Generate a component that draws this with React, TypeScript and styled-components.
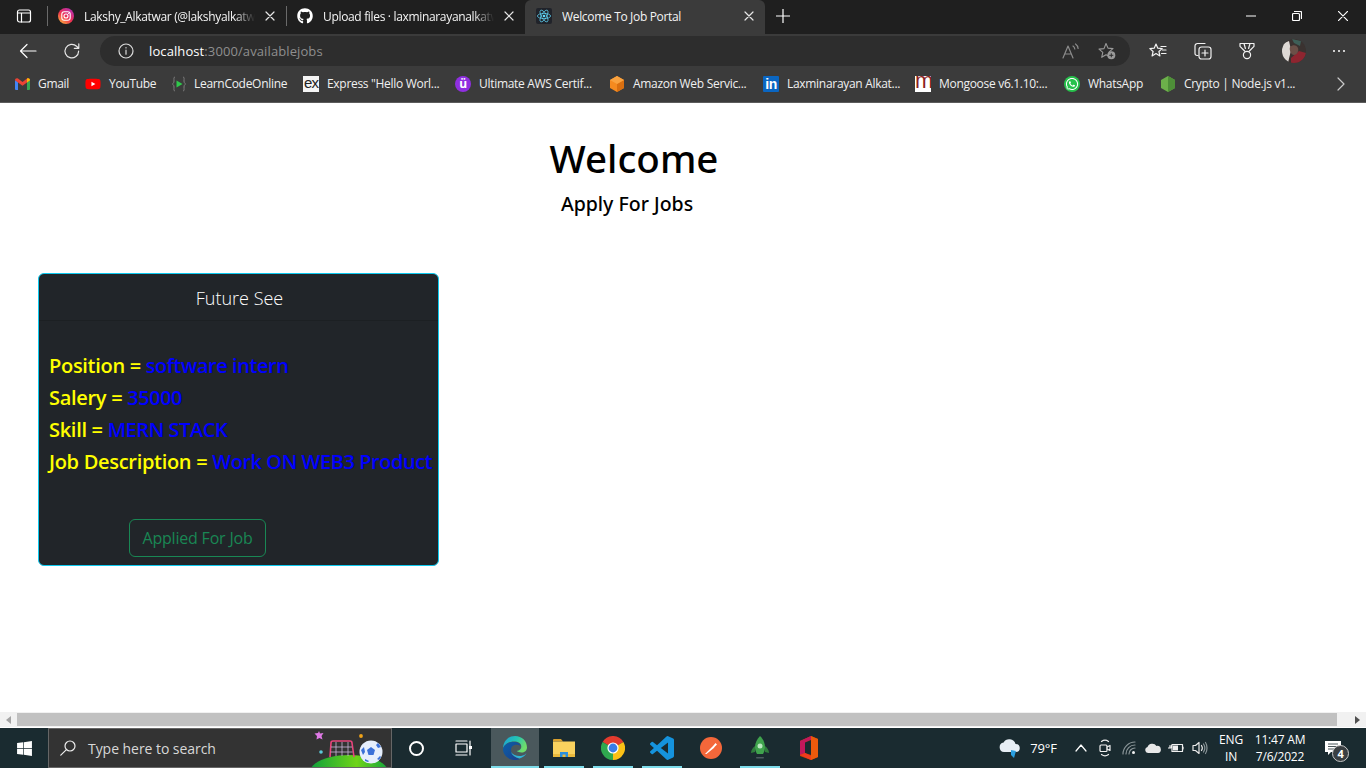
import React from 'react'
import styled, { createGlobalStyle } from 'styled-components'
import { FaGithub, FaWhatsapp, FaWindows, FaYoutube } from 'react-icons/fa'

const UI_FONT = '"Open Sans", "Noto Sans", "Liberation Sans", sans-serif'
const MEDIUM_FONT = '"Noto Sans", "Open Sans", "Liberation Sans", sans-serif'

const GlobalStyle = createGlobalStyle`
  html, body {
    margin: 0;
    padding: 0;
    width: 1366px;
    height: 768px;
    overflow: hidden;
    background: #fff;
    font-family: ${UI_FONT};
  }
  * { box-sizing: border-box; }
`

/* ---------- small drawn icons ---------- */

const Stroke = styled.svg`
  display: block;
  flex: none;
  fill: none;
  stroke: currentColor;
  stroke-width: 1.2;
  stroke-linecap: round;
  stroke-linejoin: round;
`

const Drawn = styled.svg`
  display: block;
  flex: none;
`

const SidebarIcon = () => (
  <Stroke width="16" height="16" viewBox="0 0 16 16" color="#fff" strokeWidth="1.5">
    <rect x="1.5" y="2" width="13" height="12" rx="2" />
    <path d="M1.5 5h13M5.5 5v9" />
  </Stroke>
)

const Close = ({ size = 10 }: { size?: number }) => (
  <Stroke width={size} height={size} viewBox="0 0 10 10" color="#e6e6e6">
    <path d="M1 1l8 8M9 1l-8 8" />
  </Stroke>
)

const Instagram = () => (
  <Drawn width="16" height="16" viewBox="0 0 16 16">
    <defs>
      <linearGradient id="ig" x1="0.1" y1="1" x2="0.9" y2="0">
        <stop offset="0" stopColor="#fdc13c" />
        <stop offset="0.45" stopColor="#f0304f" />
        <stop offset="1" stopColor="#b02fc0" />
      </linearGradient>
    </defs>
    <circle cx="8" cy="8" r="8" fill="url(#ig)" />
    <rect x="3.8" y="3.8" width="8.4" height="8.4" rx="2.4" fill="none" stroke="#fff" strokeWidth="1.1" />
    <circle cx="8" cy="8" r="2" fill="none" stroke="#fff" strokeWidth="1.1" />
    <circle cx="10.5" cy="5.5" r="0.6" fill="#fff" />
  </Drawn>
)

const ReactIcon = () => (
  <Drawn width="16" height="16" viewBox="0 0 16 16">
    <rect width="16" height="16" rx="2" fill="#20232a" />
    <g fill="none" stroke="#61dafb" strokeWidth="0.7">
      <ellipse cx="8" cy="8" rx="6.6" ry="2.6" />
      <ellipse cx="8" cy="8" rx="6.6" ry="2.6" transform="rotate(60 8 8)" />
      <ellipse cx="8" cy="8" rx="6.6" ry="2.6" transform="rotate(120 8 8)" />
    </g>
    <circle cx="8" cy="8" r="1.3" fill="#61dafb" />
  </Drawn>
)

const BackIcon = () => (
  <Stroke width="18" height="16" viewBox="0 0 18 16" color="#fff">
    <path d="M17 8H1.5M8 1.5L1.5 8 8 14.5" />
  </Stroke>
)

const RefreshIcon = () => (
  <Stroke width="18" height="18" viewBox="0 0 18 18" color="#e8e8e8">
    <path d="M15.6 9.2a6.8 6.8 0 1 1-2-4.9l2 1.9M15.8 1.8v4.5h-4.5" />
  </Stroke>
)

const InfoIcon = () => (
  <Stroke width="16" height="16" viewBox="0 0 16 16" color="#dcdcdc">
    <circle cx="8" cy="8" r="7" />
    <path d="M8 7.2v4M8 4.6v.4" />
  </Stroke>
)

const ReadAloud = () => (
  <Stroke width="17" height="16" viewBox="0 0 17 16" color="#8b8b8b">
    <path d="M1 15L6 3l5 12M2.800 11h6.400M11 3c1 .7 1.600 1.600 1.800 3M13.500 1c1.500 1 2.400 2.600 2.600 4.500" />
  </Stroke>
)

const StarAdd = () => (
  <Drawn width="18" height="18" viewBox="0 0 18 18">
    <path
      d="M8 1.500l2 4.600 5 .5-3.800 3.300 1.100 4.900L8 12.700l-4.300 2.600 1.100-4.900L1 7.100l5-.5z"
      fill="none"
      stroke="#9a9a9a"
      strokeWidth="1.1"
      strokeLinejoin="round"
    />
    <circle cx="13.300" cy="13.300" r="4" fill="#9a9a9a" />
    <path d="M13.300 11.300v4M11.300 13.300h4" stroke="#2e2e2e" strokeWidth="1" />
  </Drawn>
)

const FavoritesIcon = () => (
  <Stroke width="18" height="18" viewBox="0 0 18 18" color="#f2f2f2">
    <path d="M7 2l1.800 4.200 4.400.4-3.300 2.900 1 4.400L7 11.500l-3.900 2.400 1-4.400L.8 6.600l4.400-.4zM12 4.500h5M13.500 8h3.500M12.500 11.500h4.500" />
  </Stroke>
)

const CollectionsIcon = () => (
  <Stroke width="18" height="18" viewBox="0 0 18 18" color="#f2f2f2">
    <path d="M4 13.500H3a2 2 0 0 1-2-2V4a2.500 2.500 0 0 1 2.500-2.500H11" />
    <rect x="5" y="5" width="12" height="12" rx="2.500" />
    <path d="M11 8v6M8 11h6" />
  </Stroke>
)

const MedalIcon = () => (
  <Stroke width="18" height="18" viewBox="0 0 18 18" color="#f2f2f2">
    <path d="M2 1.500h14v2.800L11.400 9M2 1.500v2.800L6.600 9M6 1.500l1.400 5M12 1.500l-1.400 5" />
    <circle cx="9" cy="13" r="3.600" />
  </Stroke>
)

const AvatarSvg = styled(Drawn)`
  margin-left: -1px;
`

const Avatar = () => (
  <AvatarSvg width="24" height="24" viewBox="0 0 24 24">
    <defs>
      <clipPath id="av">
        <circle cx="12" cy="12" r="12" />
      </clipPath>
    </defs>
    <g clipPath="url(#av)">
      <rect width="24" height="24" fill="#3a3230" />
      <path d="M0 5l7-3 2 9-3 13H0z" fill="#ded9d5" />
      <path d="M9 19l8-7 7 2v10H9z" fill="#8e2530" />
      <path d="M8 8c3-3 7-2 8 1s-1 7-4 7-5-5-4-8z" fill="#6b5048" />
      <path d="M10 0l9 2-1 5-6-3z" fill="#3e5f58" />
    </g>
  </AvatarSvg>
)

const Chevron = () => (
  <Stroke width="8" height="14" viewBox="0 0 8 14" color="#c9c9c9">
    <path d="M1 1l6 6-6 6" />
  </Stroke>
)

/* bookmark favicons */

const Gmail = () => (
  <Drawn width="15" height="12" viewBox="0 0 15 12">
    <path d="M0 2l3 2v8H1a1 1 0 0 1-1-1z" fill="#4285f4" />
    <path d="M15 2l-3 2v8h2a1 1 0 0 0 1-1z" fill="#34a853" />
    <path d="M0 2.200C0 .6 1.600-.4 3 .6l4.500 3.300L12 .6c1.400-1 3 0 3 1.600l-3 2.300-4.500 3.300L3 4.500z" fill="#ea4335" />
    <path d="M12 .6c1.400-1 3 0 3 1.600l-3 2.300z" fill="#fbbc04" />
  </Drawn>
)

const CodeOnline = () => (
  <Drawn width="14" height="16" viewBox="0 0 14 16">
    <path d="M3 1C1.500 1 2 3 2 5S1 7.500.5 8C1 8.500 2 9 2 11s-.5 4 1 4M11 1c1.500 0 1 2 1 4s1 2.500 1.500 3c-.5.5-1.500 1-1.500 3s.5 4-1 4" fill="none" stroke="#7d7d7d" strokeWidth="1" />
    <path d="M4.500 4.500l6 3.500-6 3.500z" fill="#2fc94b" />
  </Drawn>
)

const ExpressBox = styled.span`
  flex: none;
  width: 16px;
  height: 16px;
  background: #f4f4f4;
  color: #222;
  font: 400 15px/14px "Liberation Sans", sans-serif;
  letter-spacing: -1px;
  text-align: center;
  overflow: hidden;
`

const UltimateBadge = styled.span`
  flex: none;
  width: 16px;
  height: 16px;
  border-radius: 50%;
  background: #8f2fe0;
  color: #fff;
  font: 700 12px/15px ${UI_FONT};
  text-align: center;
`

const MongooseBox = styled.span`
  flex: none;
  width: 16px;
  height: 16px;
  background: #fff;
  color: #8c1f24;
  font: 400 22px/10px "Liberation Sans", sans-serif;
  text-align: center;
  overflow: hidden;
`

const LinkedinBox = styled.span`
  flex: none;
  width: 16px;
  height: 16px;
  border-radius: 1px;
  background: #0a66c2;
  color: #fff;
  font: 700 14px/16px "Liberation Sans", sans-serif;
  letter-spacing: -0.5px;
  text-align: center;
`

const AwsCube = () => (
  <Drawn width="16" height="16" viewBox="0 0 16 16">
    <path d="M8 0l7 4v8l-7 4-7-4V4z" fill="#f58a1f" />
    <path d="M8 8l7-4v8l-7 4z" fill="#d96f10" />
    <path d="M8 8L1 4l7-4 7 4z" fill="#f9a23f" />
  </Drawn>
)

const NodeHex = () => (
  <Drawn width="16" height="16" viewBox="0 0 16 16">
    <path d="M8 0l7 4v8l-7 4-7-4V4z" fill="#6cb04a" />
    <path d="M8 0l7 4v8l-7 4z" fill="#4e8f38" />
  </Drawn>
)

/* taskbar icons */

const SearchGlyph = () => (
  <Stroke width="16" height="16" viewBox="0 0 16 16" color="#eee" strokeWidth="1.1">
    <circle cx="10" cy="6" r="5" />
    <path d="M6.400 9.600L.8 15.200" />
  </Stroke>
)

const ScoreArt = () => (
  <ArtHolder>
    <svg width="84" height="40" viewBox="0 0 84 40">
      <defs>
        <linearGradient id="hill" x1="0" y1="0" x2="1" y2="0">
          <stop offset="0" stopColor="#0fa03a" />
          <stop offset="0.6" stopColor="#6fd418" />
          <stop offset="1" stopColor="#16a63a" />
        </linearGradient>
      </defs>
      <path d="M4 40C10 31 26 27 42 27s32 4 38 13z" fill="url(#hill)" />
      <path d="M23 29l1-14c0-1 1-2 2-2h17c1 0 2 1 2 2l2 14" fill="none" stroke="#e8457c" strokeWidth="1.600" />
      <path d="M29 14v14M35 14v14M41 14v14M24 19h21M23.500 24h22" stroke="#c9b6d8" strokeWidth="0.800" fill="none" />
      <circle cx="64" cy="24" r="11.500" fill="#e6eefc" />
      <path d="M64 19l4 3-1.500 5h-5L60 22z" fill="#3a70d8" />
      <path d="M54 22l3-3 1 5-2 3zM71 15l3 4-3 1-2-3zM70 31l3-3 1 1-2 3zM58 31l4 2-1 1-3-1z" fill="#3a70d8" />
      <path d="M12 3l1 2.500 3.500-.5-2 3 1 3.500-3-1.500-3 1.500.5-3.500-2.500-2.500 3.500-.5z" fill="#df7ae6" />
      <circle cx="14" cy="24" r="1.800" fill="#5cc8d8" />
      <circle cx="54" cy="8" r="1.900" fill="#f0a318" />
    </svg>
  </ArtHolder>
)

const Edge = () => (
  <Drawn width="24" height="24" viewBox="0 0 24 24">
    <defs>
      <linearGradient id="edgeA" x1="0" y1="0" x2="1" y2="0.4">
        <stop offset="0" stopColor="#1d9fd8" />
        <stop offset="0.55" stopColor="#23c4b4" />
        <stop offset="1" stopColor="#6fdc6a" />
      </linearGradient>
      <linearGradient id="edgeB" x1="0" y1="0" x2="1" y2="1">
        <stop offset="0" stopColor="#0b5fa8" />
        <stop offset="1" stopColor="#1a3f8c" />
      </linearGradient>
    </defs>
    <path d="M12 0c7 0 12 5 12 11.500 0 3-2.500 5-5.500 5-2 0-4-.6-4.800-1.400 3-.4 4.600-2 4.600-4.300C18.300 7 15 5.500 11 5.500 5 5.500.6 9.500 0 13 0 5.500 5 0 12 0z" fill="url(#edgeA)" />
    <path d="M0 13C.6 9.500 5 6 10.500 6c3.500 0 6.500 1.500 7 3.800-1.500-1-4-1.400-6-.8-3 1-4.200 4-3 7.500 1 3 4 5.500 8.500 6.500-1.500.6-3 1-5 1C6 24 0 19.500 0 13z" fill="url(#edgeB)" />
    <path d="M16.500 22.500c-4.500-1-7.500-3.500-8.500-6.500 2 3 6 4.500 10 4 2.500-.3 4.500-1.500 5.500-3-1 2.500-3.500 4.500-7 5.500z" fill="#2fb4d8" />
  </Drawn>
)

const Explorer = () => (
  <Drawn width="22" height="18" viewBox="0 0 22 18">
    <path d="M0 1a1 1 0 0 1 1-1h7l2 2.500H0z" fill="#d9a02e" />
    <rect y="2.500" width="22" height="15.500" fill="#f9d25e" />
    <rect y="15" width="22" height="3" fill="#e9b93c" />
    <path d="M7 18v-5h8v5h-2.500v-2.500h-3V18z" fill="#2b8fdc" />
  </Drawn>
)

const Chrome = () => (
  <Drawn width="24" height="24" viewBox="0 0 24 24">
    <path d="M12 12L1.600 6a12 12 0 0 1 20.800 0z" fill="#e33b2e" />
    <path d="M12 12l10.400-6A12 12 0 0 1 12 24z" fill="#fbc116" />
    <path d="M12 12v12A12 12 0 0 1 1.600 6z" fill="#2fa84f" />
    <circle cx="12" cy="12" r="5.600" fill="#fff" />
    <circle cx="12" cy="12" r="4.400" fill="#3a7de8" />
  </Drawn>
)

const VsCode = () => (
  <Drawn width="24" height="24" viewBox="0 0 24 24">
    <path
      d="M23.150 2.587L18.210.21a1.494 1.494 0 0 0-1.705.29l-9.460 8.630-4.120-3.128a.999.999 0 0 0-1.276.057L.327 7.261A1 1 0 0 0 .326 8.740L3.899 12 .326 15.260a1 1 0 0 0 .001 1.479L1.650 17.940a.999.999 0 0 0 1.276.057l4.120-3.128 9.460 8.630a1.492 1.492 0 0 0 1.704.29l4.942-2.377A1.500 1.500 0 0 0 24 20.060V3.939a1.500 1.500 0 0 0-.850-1.352zm-5.146 14.861L10.826 12l7.178-5.448v10.896z"
      fill="#1593dd"
    />
  </Drawn>
)

const Postman = () => (
  <Drawn width="22" height="22" viewBox="0 0 22 22">
    <circle cx="11" cy="11" r="11" fill="#f4673a" />
    <path d="M5 17l8-8 1.500 1.500-8 6.500zM13 9l2.500-3 1.500 1.500-3 3z" fill="#fff" />
  </Drawn>
)

const Rocket = () => (
  <Drawn width="20" height="24" viewBox="0 0 20 24">
    <path d="M10 0c3 3 5 7 5 11 0 3-1 5-2 7H7c-1-2-2-4-2-7 0-4 2-8 5-11z" fill="#3fa34d" />
    <path d="M5 10c-2 1.500-4 4-4 7l4-1zM15 10c2 1.500 4 4 4 7l-4-1z" fill="#2f7d3c" />
    <circle cx="10" cy="10" r="2.500" fill="#b9e6bf" />
    <rect x="6" y="21" width="8" height="1.500" rx="0.700" fill="#4a5a5e" />
  </Drawn>
)

const Office = () => (
  <Drawn width="18" height="24" viewBox="0 0 18 24">
    <path d="M0 5l11-5 7 3v18l-7 3-11-4z" fill="#d83b01" />
    <path d="M11 0l7 3v18l-7 3z" fill="#eb5a0c" />
    <path d="M0 5l11-5v4L5 6.500V17L0 19z" fill="#c2185b" />
    <path d="M5 6.500L11 4v15l-6-2z" fill="#1a2b30" />
    <path d="M0 19l5-2 6 3v4z" fill="#ef3b1f" />
  </Drawn>
)

const Weather = () => (
  <Drawn width="22" height="21" viewBox="0 0 22 21">
    <path d="M5 14a4.800 4.800 0 0 1-.4-9.500A6.500 6.500 0 0 1 16.500 6a4 4 0 0 1 .5 8z" fill="#e6eef5" />
    <path d="M12 12l5 1-2 7-3-3z" fill="#2a9fe0" />
  </Drawn>
)

const TrayUp = () => (
  <Stroke width="12" height="8" viewBox="0 0 12 8" color="#fff">
    <path d="M1 7l5-6 5 6" />
  </Stroke>
)

const Meet = () => (
  <Stroke width="12" height="18" viewBox="0 0 12 18" color="#f0f0f0" strokeWidth="1">
    <rect x="1" y="6" width="7" height="6.500" rx="1" />
    <path d="M8 8l3-1.500v5L8 10M2.500 2.500c2-1.500 5-1.500 7 0M2.500 15.500c2 1.500 5 1.500 7 0" />
  </Stroke>
)

const Wifi = () => (
  <Stroke width="15" height="14" viewBox="0 0 15 14" color="#8a9598" strokeWidth="1">
    <path d="M1 13C1 6.500 6.500 1 13 1M4 13c0-5 4-9 9-9M7 13c0-3.300 2.700-6 6-6" />
    <circle cx="11.500" cy="11.500" r="1.500" fill="#f0f0f0" stroke="none" />
  </Stroke>
)

const OneDrive = () => (
  <Drawn width="16" height="10" viewBox="0 0 16 10">
    <path d="M3 10a3 3 0 0 1-.5-5.900A5 5 0 0 1 11.500 3 3.500 3.500 0 0 1 13 10z" fill="#e8e8e8" />
  </Drawn>
)

const Battery = () => (
  <Stroke width="16" height="10" viewBox="0 0 16 10" color="#f0f0f0" strokeWidth="1">
    <rect x="4" y="1.500" width="10.500" height="7" />
    <path d="M15 4v2M.5 5H3M2 2.500v2M3.500 2.500v2" />
    <rect x="5" y="2.500" width="5" height="5" fill="#f0f0f0" stroke="none" />
  </Stroke>
)

const Speaker = () => (
  <Stroke width="16" height="14" viewBox="0 0 16 14" color="#e8e8e8" strokeWidth="1">
    <path d="M1 4.500h2.500L7 1.500v11l-3.500-3H1zM9.500 4.500c1 1.500 1 3.500 0 5" />
    <path d="M11.500 3c1.500 2.200 1.500 5.800 0 8M13.500 1.500c2 3 2 8 0 11" stroke="#8a9598" />
  </Stroke>
)

const Notice = () => (
  <Drawn width="16" height="14" viewBox="0 0 16 14">
    <path d="M0 0h16v11H6l-3 3v-3H0z" fill="#fff" />
    <path d="M3 3h10M3 5.500h10M3 8h7" stroke="#1a2b30" strokeWidth="0.800" />
  </Drawn>
)

/* ---------- browser chrome ---------- */

const Shell = styled.div`
  width: 1366px;
  height: 768px;
  display: flex;
  flex-direction: column;
  overflow: hidden;
  background: #fff;
`

const TabStrip = styled.div`
  height: 34px;
  flex: none;
  display: flex;
  align-items: stretch;
  background: #1f1f1f;
`

const SidebarSlot = styled.div`
  width: 47px;
  display: flex;
  align-items: center;
  justify-content: flex-start;
  padding: 0 0 2px 16px;
`

const TabDivider = styled.i`
  flex: none;
  width: 1px;
  height: 20px;
  margin-top: 6px;
  background: #6a6a6a;
`

const Tab = styled.div<{ $active?: boolean }>`
  width: ${(p) => (p.$active ? '240px' : '238px')};
  display: flex;
  align-items: center;
  padding: 0 11px 2px ${(p) => (p.$active ? '11px' : '10px')};
  gap: 10px;
  color: #f4f4f4;
  background: ${(p) => (p.$active ? '#3b3b3b' : 'transparent')};
  border-radius: ${(p) => (p.$active ? '6px 6px 0 0' : '0')};
`

const TabTitle = styled.span<{ $fade?: boolean }>`
  flex: 1;
  min-width: 0;
  font-size: 12px;
  letter-spacing: -0.33px;
  white-space: nowrap;
  overflow: hidden;
  ${(p) =>
    p.$fade &&
    `-webkit-mask-image: linear-gradient(to right, #000 88%, transparent);
     mask-image: linear-gradient(to right, #000 88%, transparent);`}
`

const NewTab = styled.div`
  width: 34px;
  margin-left: 1px;
  display: flex;
  align-items: center;
  justify-content: center;
  padding-bottom: 2px;
`

const WindowButtons = styled.div`
  margin-left: auto;
  display: flex;
`

const WindowButton = styled.div`
  width: 46px;
  display: flex;
  align-items: center;
  justify-content: center;
  padding-bottom: 2px;
`

const Toolbar = styled.div`
  height: 33px;
  flex: none;
  display: flex;
  align-items: center;
  padding-left: 19px;
  background: #3b3b3b;
`

const NavButton = styled.div`
  width: 44px;
  display: flex;
  align-items: center;
  justify-content: flex-start;
`

const AddressBar = styled.div`
  width: 1030px;
  height: 30px;
  margin-left: -7px;
  padding: 0 14px 0 18px;
  border-radius: 15px;
  background: #2d2d2d;
  display: flex;
  align-items: center;
`

const Url = styled.span`
  margin-left: 15px;
  font-size: 13px;
  letter-spacing: 0.1px;
  color: #8f8f8f;
`

const Host = styled.span`
  color: #fff;
`

const AddressActions = styled.div`
  margin-left: auto;
  display: flex;
  align-items: center;
  gap: 19px;
`

const ToolActions = styled.div`
  margin-left: 19px;
  display: flex;
  align-items: center;
  gap: 26.5px;
`

const Dots = styled.div`
  margin-left: 27px;
  display: flex;
  gap: 3px;
`

const Dot = styled.i`
  width: 2px;
  height: 2px;
  border-radius: 50%;
  background: #fff;
`

const Bookmarks = styled.div`
  height: 36px;
  flex: none;
  display: grid;
  grid-template-columns: 70px 87px 131px 152px 154px 154px 152px 149px 96px 177px 9px;
  align-items: center;
  padding: 0 0 2px 15px;
  background: #3b3b3b;
  border-bottom: 1px solid #5c5c5c;
`

const Bookmark = styled.div`
  display: flex;
  align-items: center;
  gap: 8px;
  min-width: 0;
  color: #f0f0f0;
  font-size: 12px;
  letter-spacing: -0.3px;
  white-space: nowrap;
`

const YoutubeGlyph = styled(FaYoutube)`
  flex: none;
  color: #f00;
  background: linear-gradient(#fff, #fff) center / 6px 6px no-repeat;
`

const WhatsappGlyph = styled(FaWhatsapp)`
  flex: none;
  color: #fff;
  background: #27c24c;
  border-radius: 50%;
  padding: 1px;
`

/* ---------- page ---------- */

const Page = styled.main`
  flex: 1;
  min-height: 0;
  padding-top: 31px;
  color: #000;
`

const Hero = styled.h1`
  width: 1268px;
  margin: 0;
  font-family: ${MEDIUM_FONT};
  font-size: 38.5px;
  line-height: 48px;
  font-weight: 500;
  text-align: center;
`

const SubHero = styled.h4`
  width: 1254px;
  margin: 10px 0 0;
  font-family: ${MEDIUM_FONT};
  font-size: 19.5px;
  line-height: 24px;
  font-weight: 500;
  text-align: center;
`

const JobCard = styled.section`
  width: 401px;
  height: 293px;
  margin: 57px 0 0 38px;
  display: flex;
  flex-direction: column;
  background: #212529;
  border: 1px solid #0dcaf0;
  border-radius: 6px;
`

const CardHead = styled.header`
  height: 47px;
  flex: none;
  display: flex;
  align-items: center;
  justify-content: center;
  padding: 2px 0 0 2px;
  color: #fff;
  font-size: 18px;
  font-weight: 300;
  border-bottom: 1px solid rgba(0, 0, 0, 0.125);
`

const CardBody = styled.div`
  flex: 1;
  padding: 29px 0 8px 10px;
  display: flex;
  flex-direction: column;
  align-items: flex-start;
`

const Field = styled.div`
  font-size: 20px;
  line-height: 32px;
  font-weight: 600;
  letter-spacing: -0.3px;
  white-space: nowrap;
  color: #ff0;
`

const Value = styled.span`
  letter-spacing: -0.45px;
  color: #00f;
`

const AppliedButton = styled.button`
  width: 137px;
  height: 38px;
  margin: auto 0 0 80px;
  padding: 0;
  border: 1px solid #198754;
  border-radius: 6px;
  background: transparent;
  color: #198754;
  font: 400 16px ${UI_FONT};
  letter-spacing: -0.2px;
`

/* ---------- scrollbar + taskbar ---------- */

const ScrollBar = styled.div`
  height: 15px;
  flex: none;
  display: flex;
  align-items: center;
  justify-content: space-between;
  padding: 1px 0;
  background: #f1f1f1;
`

const ScrollArrow = styled.div<{ $right?: boolean }>`
  width: 17px;
  display: flex;
  justify-content: center;
  &::before {
    content: '';
    border-style: solid;
    border-width: 4px 0 4px 5px;
    border-color: transparent transparent transparent ${(p) => (p.$right ? '#505050' : '#a3a3a3')};
    transform: ${(p) => (p.$right ? 'none' : 'rotate(180deg)')};
  }
`

const ScrollThumb = styled.div`
  width: 1320px;
  height: 13px;
  margin-right: auto;
  background: #c1c1c1;
`

const Taskbar = styled.footer`
  height: 41px;
  flex: none;
  display: flex;
  align-items: stretch;
  background: #1a2b30;
  border-top: 1px solid #fff;
  color: #fff;
`

const StartSlot = styled.div`
  width: 48px;
  display: flex;
  align-items: center;
  justify-content: center;
`

const SearchBox = styled.div`
  position: relative;
  width: 344px;
  display: flex;
  align-items: center;
  gap: 12px;
  padding: 0 0 0 11px;
  background: #333;
  border: 1px solid #666;
  overflow: hidden;
  color: #d8d8d8;
  font-size: 14px;
  letter-spacing: -0.05px;
`

const ArtHolder = styled.div`
  position: absolute;
  right: 0;
  top: -1px;
  width: 84px;
  height: 40px;
`

const TaskSlot = styled.div<{ $w: number; $active?: boolean; $line?: boolean }>`
  position: relative;
  width: ${(p) => p.$w}px;
  display: flex;
  align-items: center;
  justify-content: center;
  background: ${(p) => (p.$active ? '#4a585c' : 'transparent')};
  &::after {
    content: '';
    display: ${(p) => (p.$line ? 'block' : 'none')};
    position: absolute;
    left: ${(p) => (p.$active ? '0' : '5px')};
    right: ${(p) => (p.$active ? '0' : '4px')};
    bottom: 0;
    height: 2px;
    background: #7ddcea;
  }
`

const TaskViewSlot = styled(TaskSlot)`
  padding-right: 4px;
`

const Cortana = styled.div`
  width: 15px;
  height: 15px;
  border: 2.500px solid #fff;
  border-radius: 50%;
`

const TaskViewIcon = () => (
  <Stroke width="18" height="16" viewBox="0 0 18 16" color="#fff" strokeWidth="1.2">
    <rect x="1" y="4" width="11" height="8" />
    <path d="M1 1h11M1 15h11M15 1v14" />
    <rect x="14" y="6" width="3" height="3" fill="#fff" stroke="none" />
  </Stroke>
)

const Tray = styled.div`
  margin-left: auto;
  display: flex;
  align-items: center;
  font-size: 13px;
  letter-spacing: -0.2px;
`

const TrayCell = styled.div<{ $w: number }>`
  width: ${(p) => p.$w}px;
  display: flex;
  align-items: center;
  justify-content: center;
`

const TempCell = styled(TrayCell)`
  margin: 0 12px 0 9px;
  white-space: nowrap;
`

const TrayStack = styled.div<{ $w: number }>`
  width: ${(p) => p.$w}px;
  text-align: center;
  font-size: 12px;
  line-height: 17px;
  letter-spacing: -0.2px;
  white-space: nowrap;
`

const LangStack = styled(TrayStack)`
  padding-left: 6px;
`

const NoticeCell = styled.div`
  position: relative;
  width: 51px;
  height: 100%;
  display: flex;
  align-items: center;
  padding-left: 10px;
`

const NoticeBadge = styled.span`
  position: absolute;
  left: 17px;
  top: 17px;
  width: 17px;
  height: 17px;
  border-radius: 50%;
  background: #3a3f42;
  border: 1px solid #c8c8c8;
  font-size: 11px;
  font-weight: 700;
  line-height: 15px;
  text-align: center;
`

const bookmarks: { icon: React.ReactNode; label: string }[] = [
  { icon: <Gmail />, label: 'Gmail' },
  { icon: <YoutubeGlyph size={16} />, label: 'YouTube' },
  { icon: <CodeOnline />, label: 'LearnCodeOnline' },
  { icon: <ExpressBox>ex</ExpressBox>, label: 'Express "Hello Worl...' },
  { icon: <UltimateBadge>ü</UltimateBadge>, label: 'Ultimate AWS Certif...' },
  { icon: <AwsCube />, label: 'Amazon Web Servic...' },
  { icon: <LinkedinBox>in</LinkedinBox>, label: 'Laxminarayan Alkat...' },
  { icon: <MongooseBox>m</MongooseBox>, label: 'Mongoose v6.1.10:...' },
  { icon: <WhatsappGlyph size={16} />, label: 'WhatsApp' },
  { icon: <NodeHex />, label: 'Crypto | Node.js v1...' },
]

const job = [
  { label: 'Position', value: 'software intern' },
  { label: 'Salery', value: '35000' },
  { label: 'Skill', value: 'MERN STACK' },
  { label: 'Job Description', value: 'Work ON WEB3 Product' },
]

const taskApps = [
  { w: 48, icon: <Edge />, active: true, line: true },
  { w: 49, icon: <Explorer />, line: true },
  { w: 49, icon: <Chrome />, line: true },
  { w: 49, icon: <VsCode />, line: true },
  { w: 49, icon: <Postman /> },
  { w: 49, icon: <Rocket />, line: true },
  { w: 49, icon: <Office /> },
]

export default function App() {
  return (
    <Shell>
      <GlobalStyle />
      <TabStrip>
        <SidebarSlot>
          <SidebarIcon />
        </SidebarSlot>
        <TabDivider />
        <Tab>
          <Instagram />
          <TabTitle $fade>Lakshy_Alkatwar (@lakshyalkatwar)</TabTitle>
          <Close />
        </Tab>
        <TabDivider />
        <Tab>
          <FaGithub size={16} color="#fff" />
          <TabTitle $fade>Upload files · laxminarayanalkatwar</TabTitle>
          <Close />
        </Tab>
        <Tab $active>
          <ReactIcon />
          <TabTitle>Welcome To Job Portal</TabTitle>
          <Close />
        </Tab>
        <NewTab>
          <Stroke width="14" height="14" viewBox="0 0 14 14" color="#fff">
            <path d="M7 0v14M0 7h14" />
          </Stroke>
        </NewTab>
        <WindowButtons>
          <WindowButton>
            <Stroke width="10" height="10" viewBox="0 0 10 10" color="#fff" strokeWidth="1">
              <path d="M0 5h10" />
            </Stroke>
          </WindowButton>
          <WindowButton>
            <Stroke width="10" height="10" viewBox="0 0 10 10" color="#fff" strokeWidth="1">
              <rect x="0.500" y="2.500" width="7" height="7" rx="1" />
              <path d="M2.500 .500h6a1 1 0 0 1 1 1v6" />
            </Stroke>
          </WindowButton>
          <WindowButton>
            <Stroke width="10" height="10" viewBox="0 0 10 10" color="#fff" strokeWidth="1">
              <path d="M0 0l10 10M10 0L0 10" />
            </Stroke>
          </WindowButton>
        </WindowButtons>
      </TabStrip>

      <Toolbar>
        <NavButton>
          <BackIcon />
        </NavButton>
        <NavButton>
          <RefreshIcon />
        </NavButton>
        <AddressBar>
          <InfoIcon />
          <Url>
            <Host>localhost</Host>:3000/availablejobs
          </Url>
          <AddressActions>
            <ReadAloud />
            <StarAdd />
          </AddressActions>
        </AddressBar>
        <ToolActions>
          <FavoritesIcon />
          <CollectionsIcon />
          <MedalIcon />
          <Avatar />
        </ToolActions>
        <Dots>
          <Dot />
          <Dot />
          <Dot />
        </Dots>
      </Toolbar>

      <Bookmarks>
        {bookmarks.map((b) => (
          <Bookmark key={b.label}>
            {b.icon}
            <span>{b.label}</span>
          </Bookmark>
        ))}
        <Chevron />
      </Bookmarks>

      <Page>
        <Hero>Welcome</Hero>
        <SubHero>Apply For Jobs</SubHero>
        <JobCard>
          <CardHead>Future See</CardHead>
          <CardBody>
            {job.map((j) => (
              <Field key={j.label}>
                {j.label} = <Value>{j.value}</Value>
              </Field>
            ))}
            <AppliedButton disabled>Applied For Job</AppliedButton>
          </CardBody>
        </JobCard>
      </Page>

      <ScrollBar>
        <ScrollArrow />
        <ScrollThumb />
        <ScrollArrow $right />
      </ScrollBar>

      <Taskbar>
        <StartSlot>
          <FaWindows size={17} color="#fff" />
        </StartSlot>
        <SearchBox>
          <SearchGlyph />
          <span>Type here to search</span>
          <ScoreArt />
        </SearchBox>
        <TaskSlot $w={48}>
          <Cortana />
        </TaskSlot>
        <TaskViewSlot $w={51}>
          <TaskViewIcon />
        </TaskViewSlot>
        {taskApps.map((a, i) => (
          <TaskSlot key={i} $w={a.w} $active={a.active} $line={a.line}>
            {a.icon}
          </TaskSlot>
        ))}
        <Tray>
          <TrayCell $w={22}>
            <Weather />
          </TrayCell>
          <TempCell $w={27}>79°F</TempCell>
          <TrayCell $w={24}>
            <TrayUp />
          </TrayCell>
          <TrayCell $w={24}>
            <Meet />
          </TrayCell>
          <TrayCell $w={24}>
            <Wifi />
          </TrayCell>
          <TrayCell $w={23}>
            <OneDrive />
          </TrayCell>
          <TrayCell $w={24}>
            <Battery />
          </TrayCell>
          <TrayCell $w={23}>
            <Speaker />
          </TrayCell>
          <LangStack $w={34}>
            ENG
            <br />
            IN
          </LangStack>
          <TrayStack $w={70}>
            11:47 AM
            <br />
            7/6/2022
          </TrayStack>
          <NoticeCell>
            <Notice />
            <NoticeBadge>4</NoticeBadge>
          </NoticeCell>
        </Tray>
      </Taskbar>
    </Shell>
  )
}
